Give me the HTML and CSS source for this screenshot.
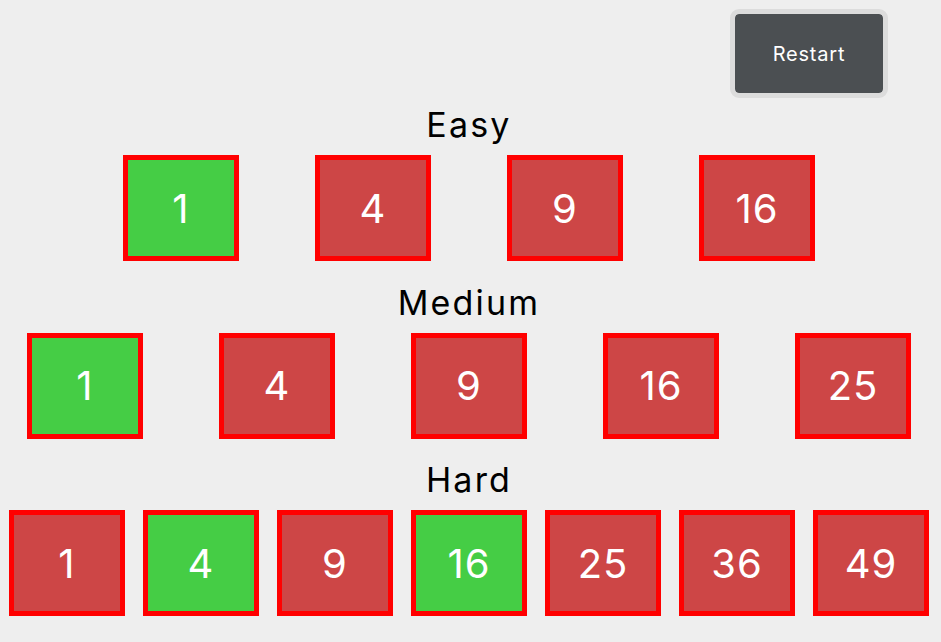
FILE: index.html
```html
<!DOCTYPE html>
<html lang="en">
<head>
<meta charset="utf-8">
<title>Squares</title>
<link rel="stylesheet" href="styles.css">
</head>
<body>
  <header class="top">
    <button class="restart">Restart</button>
  </header>
  <main class="levels">
    <section class="level">
      <h2 class="level-title">Easy</h2>
      <div class="row row-wide">
        <div class="cell cell-ok">1</div>
        <div class="cell">4</div>
        <div class="cell">9</div>
        <div class="cell">16</div>
      </div>
    </section>
    <section class="level">
      <h2 class="level-title">Medium</h2>
      <div class="row row-wide">
        <div class="cell cell-ok">1</div>
        <div class="cell">4</div>
        <div class="cell">9</div>
        <div class="cell">16</div>
        <div class="cell">25</div>
      </div>
    </section>
    <section class="level">
      <h2 class="level-title">Hard</h2>
      <div class="row row-tight">
        <div class="cell">1</div>
        <div class="cell cell-ok">4</div>
        <div class="cell">9</div>
        <div class="cell cell-ok">16</div>
        <div class="cell">25</div>
        <div class="cell">36</div>
        <div class="cell">49</div>
      </div>
    </section>
  </main>
</body>
</html>
```
FILE: styles.css
```css
* { box-sizing: border-box; }

html, body {
  margin: 0;
  padding: 0;
  background: #eeeeee;
}

body {
  font-family: Inter, "Noto Sans", sans-serif;
  color: #000;
  width: 941px;
  height: 642px;
  overflow: hidden;
}

.top {
  display: flex;
  justify-content: flex-end;
  padding: 9px 53px 0 0;
}

.restart {
  width: 158px;
  height: 89px;
  border: 5px solid #dcdcdc;
  border-radius: 9px;
  background: #4b4f52;
  background-clip: padding-box;
  color: #ffffff;
  font-family: Inter, "Noto Sans", sans-serif;
  font-size: 20px;
  font-weight: 400;
  letter-spacing: 0.8px;
  padding: 0;
  cursor: pointer;
}

.levels {
  display: flex;
  flex-direction: column;
  gap: 21.5px;
  padding: 7px 3px 0 0;
}

.level {
  display: flex;
  flex-direction: column;
  align-items: center;
  gap: 10px;
}

.level-title {
  margin: 0;
  font-size: 34px;
  line-height: 40px;
  font-weight: 400;
  letter-spacing: 2.2px;
}

.row {
  display: flex;
  justify-content: center;
}

.row-wide { gap: 76px; }
.row-tight { gap: 18px; }

.cell {
  width: 116px;
  height: 106px;
  border: 5px solid #ff0000;
  background: #cd4646;
  color: #ffffff;
  font-size: 40px;
  font-weight: 400;
  display: flex;
  align-items: center;
  justify-content: center;
  letter-spacing: 1px;
}

.cell-ok {
  background: #45cd45;
}
```
